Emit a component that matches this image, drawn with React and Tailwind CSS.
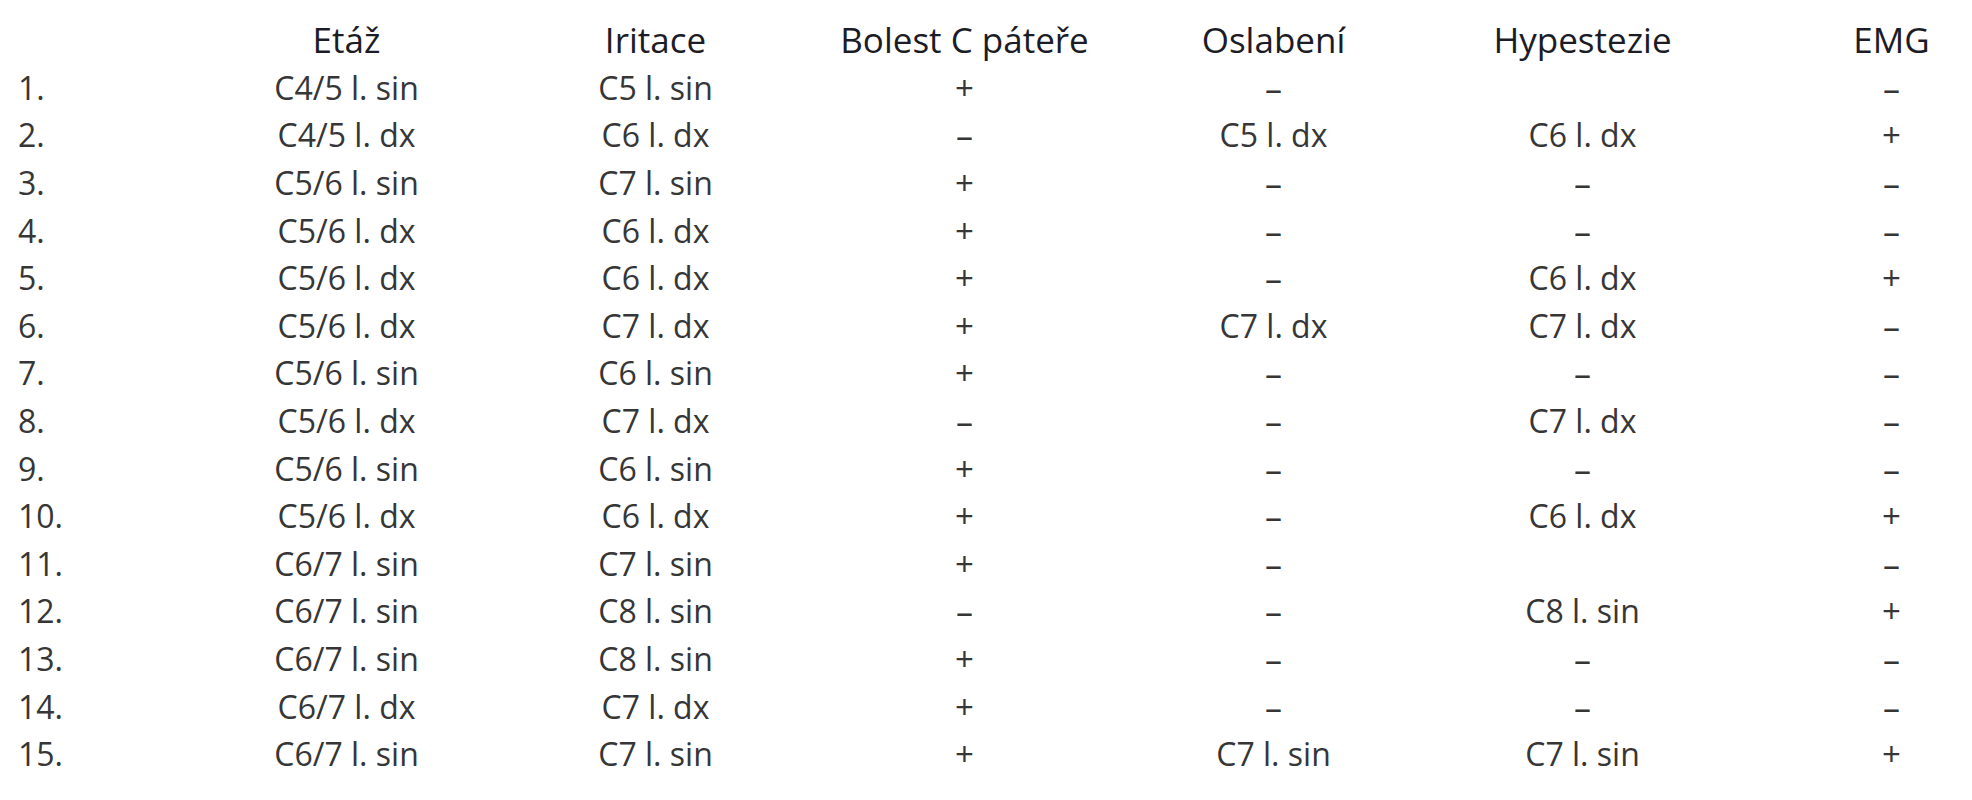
import React from "react";

const headers = ["Etáž", "Iritace", "Bolest C páteře", "Oslabení", "Hypestezie", "EMG"];

const rows = [
  ["C4/5 l. sin", "C5 l. sin", "+", "–", "", "–"],
  ["C4/5 l. dx", "C6 l. dx", "–", "C5 l. dx", "C6 l. dx", "+"],
  ["C5/6 l. sin", "C7 l. sin", "+", "–", "–", "–"],
  ["C5/6 l. dx", "C6 l. dx", "+", "–", "–", "–"],
  ["C5/6 l. dx", "C6 l. dx", "+", "–", "C6 l. dx", "+"],
  ["C5/6 l. dx", "C7 l. dx", "+", "C7 l. dx", "C7 l. dx", "–"],
  ["C5/6 l. sin", "C6 l. sin", "+", "–", "–", "–"],
  ["C5/6 l. dx", "C7 l. dx", "–", "–", "C7 l. dx", "–"],
  ["C5/6 l. sin", "C6 l. sin", "+", "–", "–", "–"],
  ["C5/6 l. dx", "C6 l. dx", "+", "–", "C6 l. dx", "+"],
  ["C6/7 l. sin", "C7 l. sin", "+", "–", "", "–"],
  ["C6/7 l. sin", "C8 l. sin", "–", "–", "C8 l. sin", "+"],
  ["C6/7 l. sin", "C8 l. sin", "+", "–", "–", "–"],
  ["C6/7 l. dx", "C7 l. dx", "+", "–", "–", "–"],
  ["C6/7 l. sin", "C7 l. sin", "+", "C7 l. sin", "C7 l. sin", "+"],
];

function Cell({ value }) {
  if (value === "–") {
    return (
      <div className="h-[47.6px] flex items-center justify-center text-[34px] leading-[34px] text-[#363636]">
        –
      </div>
    );
  }
  if (value === "+") {
    return (
      <div className="h-[47.6px] flex items-center justify-center text-[33px] leading-[34px] text-[#363636]">
        +
      </div>
    );
  }
  return (
    <div className="h-[47.6px] flex items-center justify-center text-[32px] leading-[40px] text-[#363636] whitespace-nowrap">
      {value}
    </div>
  );
}

export default function App() {
  return (
    <div className="w-[1972px] h-[800px] overflow-hidden bg-white pt-[16px]" style={{ fontFamily: '"Open Sans", "Noto Sans", sans-serif' }}>
      <div className="grid grid-cols-[192px_repeat(6,309px)] w-max">
        <div className="h-[48px]" />
        {headers.map((h) => (
          <div key={h} className="h-[48px] flex items-center justify-center text-[35px] leading-[44px] text-[#1c1c26] whitespace-nowrap">
            {h}
          </div>
        ))}
        {rows.map((r, i) => (
          <React.Fragment key={i}>
            <div className="h-[47.6px] flex items-center pl-[18px] text-[32px] leading-[40px] text-[#363636]">
              {i + 1}.
            </div>
            {r.map((c, j) => (
              <Cell key={j} value={c} />
            ))}
          </React.Fragment>
        ))}
      </div>
    </div>
  );
}
